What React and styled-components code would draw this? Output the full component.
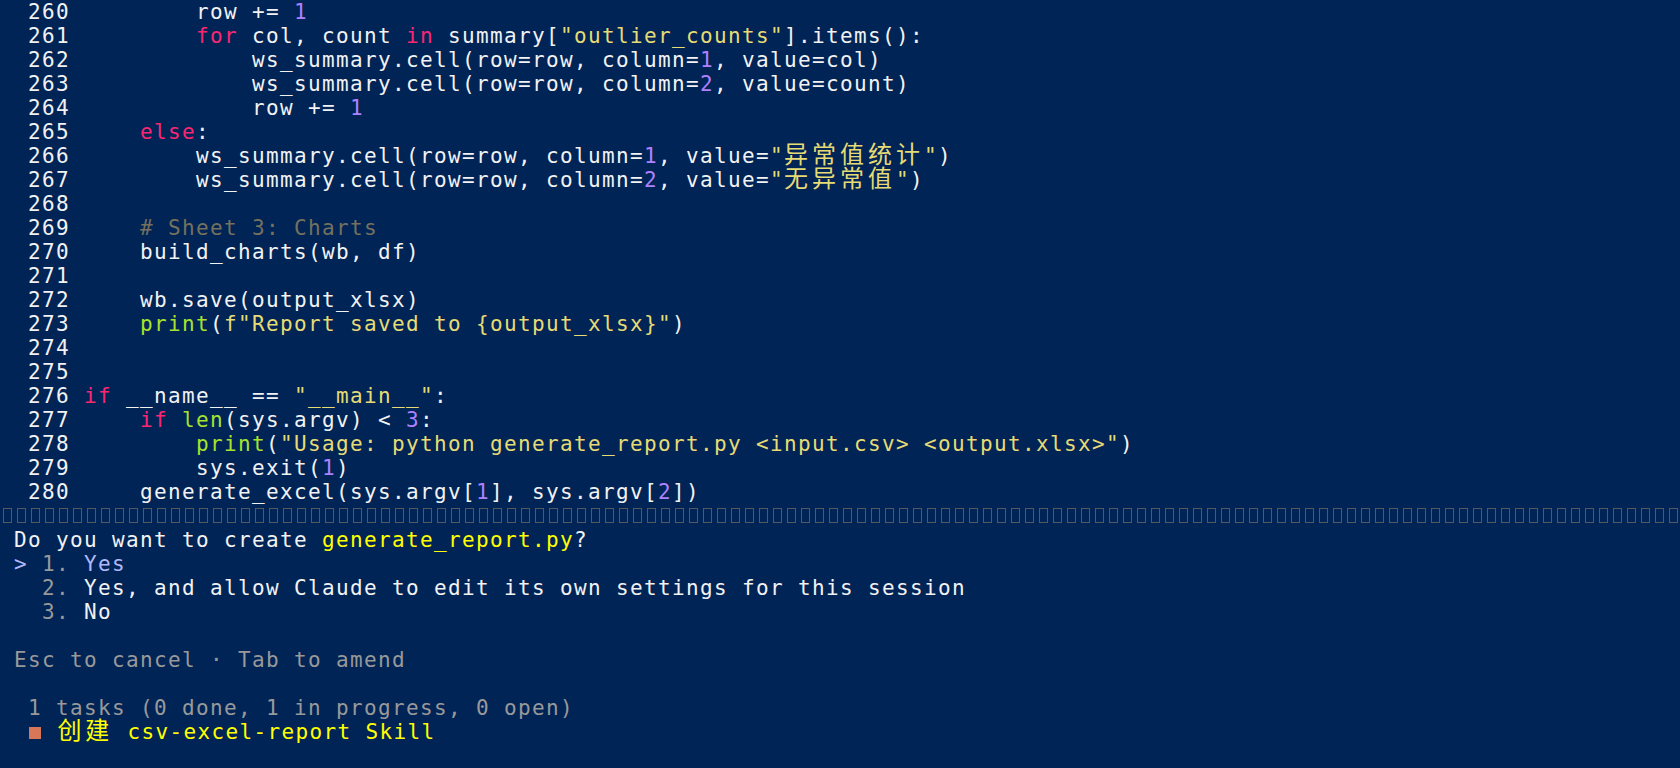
import React from 'react';
import styled, { createGlobalStyle } from 'styled-components';

const TONES = {
  text: '#f2f2f2',
  kw: '#f92672',
  num: '#ae81ff',
  str: '#e6db74',
  com: '#75715e',
  fn: '#a6e22e',
  file: '#ffff00',
  pick: '#b1b9f9',
  dim: '#999999',
};

// [line number, [[tone, text], ...]]
const CODE = [
  [260, [['text', '        row += '], ['num', '1']]],
  [261, [['text', '        '], ['kw', 'for'], ['text', ' col, count '], ['kw', 'in'], ['text', ' summary['], ['str', '"outlier_counts"'], ['text', '].items():']]],
  [262, [['text', '            ws_summary.cell(row=row, column='], ['num', '1'], ['text', ', value=col)']]],
  [263, [['text', '            ws_summary.cell(row=row, column='], ['num', '2'], ['text', ', value=count)']]],
  [264, [['text', '            row += '], ['num', '1']]],
  [265, [['text', '    '], ['kw', 'else'], ['text', ':']]],
  [266, [['text', '        ws_summary.cell(row=row, column='], ['num', '1'], ['text', ', value='], ['str', '"异常值统计"'], ['text', ')']]],
  [267, [['text', '        ws_summary.cell(row=row, column='], ['num', '2'], ['text', ', value='], ['str', '"无异常值"'], ['text', ')']]],
  [268, []],
  [269, [['text', '    '], ['com', '# Sheet 3: Charts']]],
  [270, [['text', '    build_charts(wb, df)']]],
  [271, []],
  [272, [['text', '    wb.save(output_xlsx)']]],
  [273, [['text', '    '], ['fn', 'print'], ['text', '('], ['str', 'f"Report saved to {output_xlsx}"'], ['text', ')']]],
  [274, []],
  [275, []],
  [276, [['kw', 'if'], ['text', ' __name__ == '], ['str', '"__main__"'], ['text', ':']]],
  [277, [['text', '    '], ['kw', 'if'], ['text', ' '], ['fn', 'len'], ['text', '(sys.argv) < '], ['num', '3'], ['text', ':']]],
  [278, [['text', '        '], ['fn', 'print'], ['text', '('], ['str', '"Usage: python generate_report.py <input.csv> <output.xlsx>"'], ['text', ')']]],
  [279, [['text', '        sys.exit('], ['num', '1'], ['text', ')']]],
  [280, [['text', '    generate_excel(sys.argv['], ['num', '1'], ['text', '], sys.argv['], ['num', '2'], ['text', '])']]],
];

const OPTIONS = [
  { n: '1.', label: 'Yes', active: true },
  { n: '2.', label: 'Yes, and allow Claude to edit its own settings for this session' },
  { n: '3.', label: 'No' },
];

const GlobalStyle = createGlobalStyle`
  html, body {
    margin: 0;
    padding: 0;
    background: #012456;
  }
  body {
    overflow: hidden;
  }
`;

// terminal grid: 14px cells, 24px rows
const Screen = styled.div`
  width: 1680px;
  height: 768px;
  overflow: hidden;
  background: #012456;
  color: #f2f2f2;
  font-family: 'DejaVu Sans Mono', 'Noto Sans CJK SC', monospace;
  font-size: 21px;
  letter-spacing: 1.357px;
  line-height: 24px;
`;

const Line = styled.div`
  height: 24px;
  white-space: pre;
`;

const Tok = styled.span`
  color: ${p => TONES[p.$tone]};
`;

// CJK glyphs take two terminal cells
const Wide = styled.span`
  font-family: 'Noto Sans CJK SC', sans-serif;
  font-size: 24px;
  line-height: 0;
  letter-spacing: calc(28px - 1em);
`;

const Rule = styled.div`
  display: flex;
  height: 24px;
  overflow: hidden;
`;

const Tofu = styled.span`
  flex: none;
  box-sizing: border-box;
  width: 9px;
  height: 15px;
  margin: 4px 2.5px 0;
  border: 1px solid #55585e;
`;

const Square = styled.span`
  display: inline-block;
  width: 12px;
  height: 12px;
  margin: 0 2.357px 0 1px;
  background: #d77757;
`;

const withWide = text =>
  text.split(/([\u4e00-\u9fff]+)/).map((part, i) =>
    /[\u4e00-\u9fff]/.test(part) ? <Wide key={i}>{part}</Wide> : part
  );

const CodeLine = ({ no, tokens }) => (
  <Line>
    {`  ${no} `}
    {tokens.map(([tone, text], i) => (
      <Tok key={i} $tone={tone}>
        {withWide(text)}
      </Tok>
    ))}
  </Line>
);

const App = () => {
  return (
    <Screen>
      <GlobalStyle />
      {CODE.map(([no, tokens]) => (
        <CodeLine key={no} no={no} tokens={tokens} />
      ))}
      <Rule>
        {Array.from({ length: 120 }, (_, i) => (
          <Tofu key={i} />
        ))}
      </Rule>
      <Line>
        {' Do you want to create '}
        <Tok $tone="file">generate_report.py</Tok>?
      </Line>
      {OPTIONS.map(opt => (
        <Line key={opt.n}>
          {' '}
          <Tok $tone="pick">{opt.active ? '>' : ' '}</Tok> <Tok $tone="dim">{opt.n}</Tok>{' '}
          <Tok $tone={opt.active ? 'pick' : 'text'}>{opt.label}</Tok>
        </Line>
      ))}
      <Line />
      <Line>
        <Tok $tone="dim">{' Esc to cancel · Tab to amend'}</Tok>
      </Line>
      <Line />
      <Line>
        <Tok $tone="dim">{'  1 tasks (0 done, 1 in progress, 0 open)'}</Tok>
      </Line>
      <Line>
        {'  '}
        <Square />
        {' '}
        <Tok $tone="file">{withWide('创建')} csv-excel-report Skill</Tok>
      </Line>
    </Screen>
  );
};

export default App;
